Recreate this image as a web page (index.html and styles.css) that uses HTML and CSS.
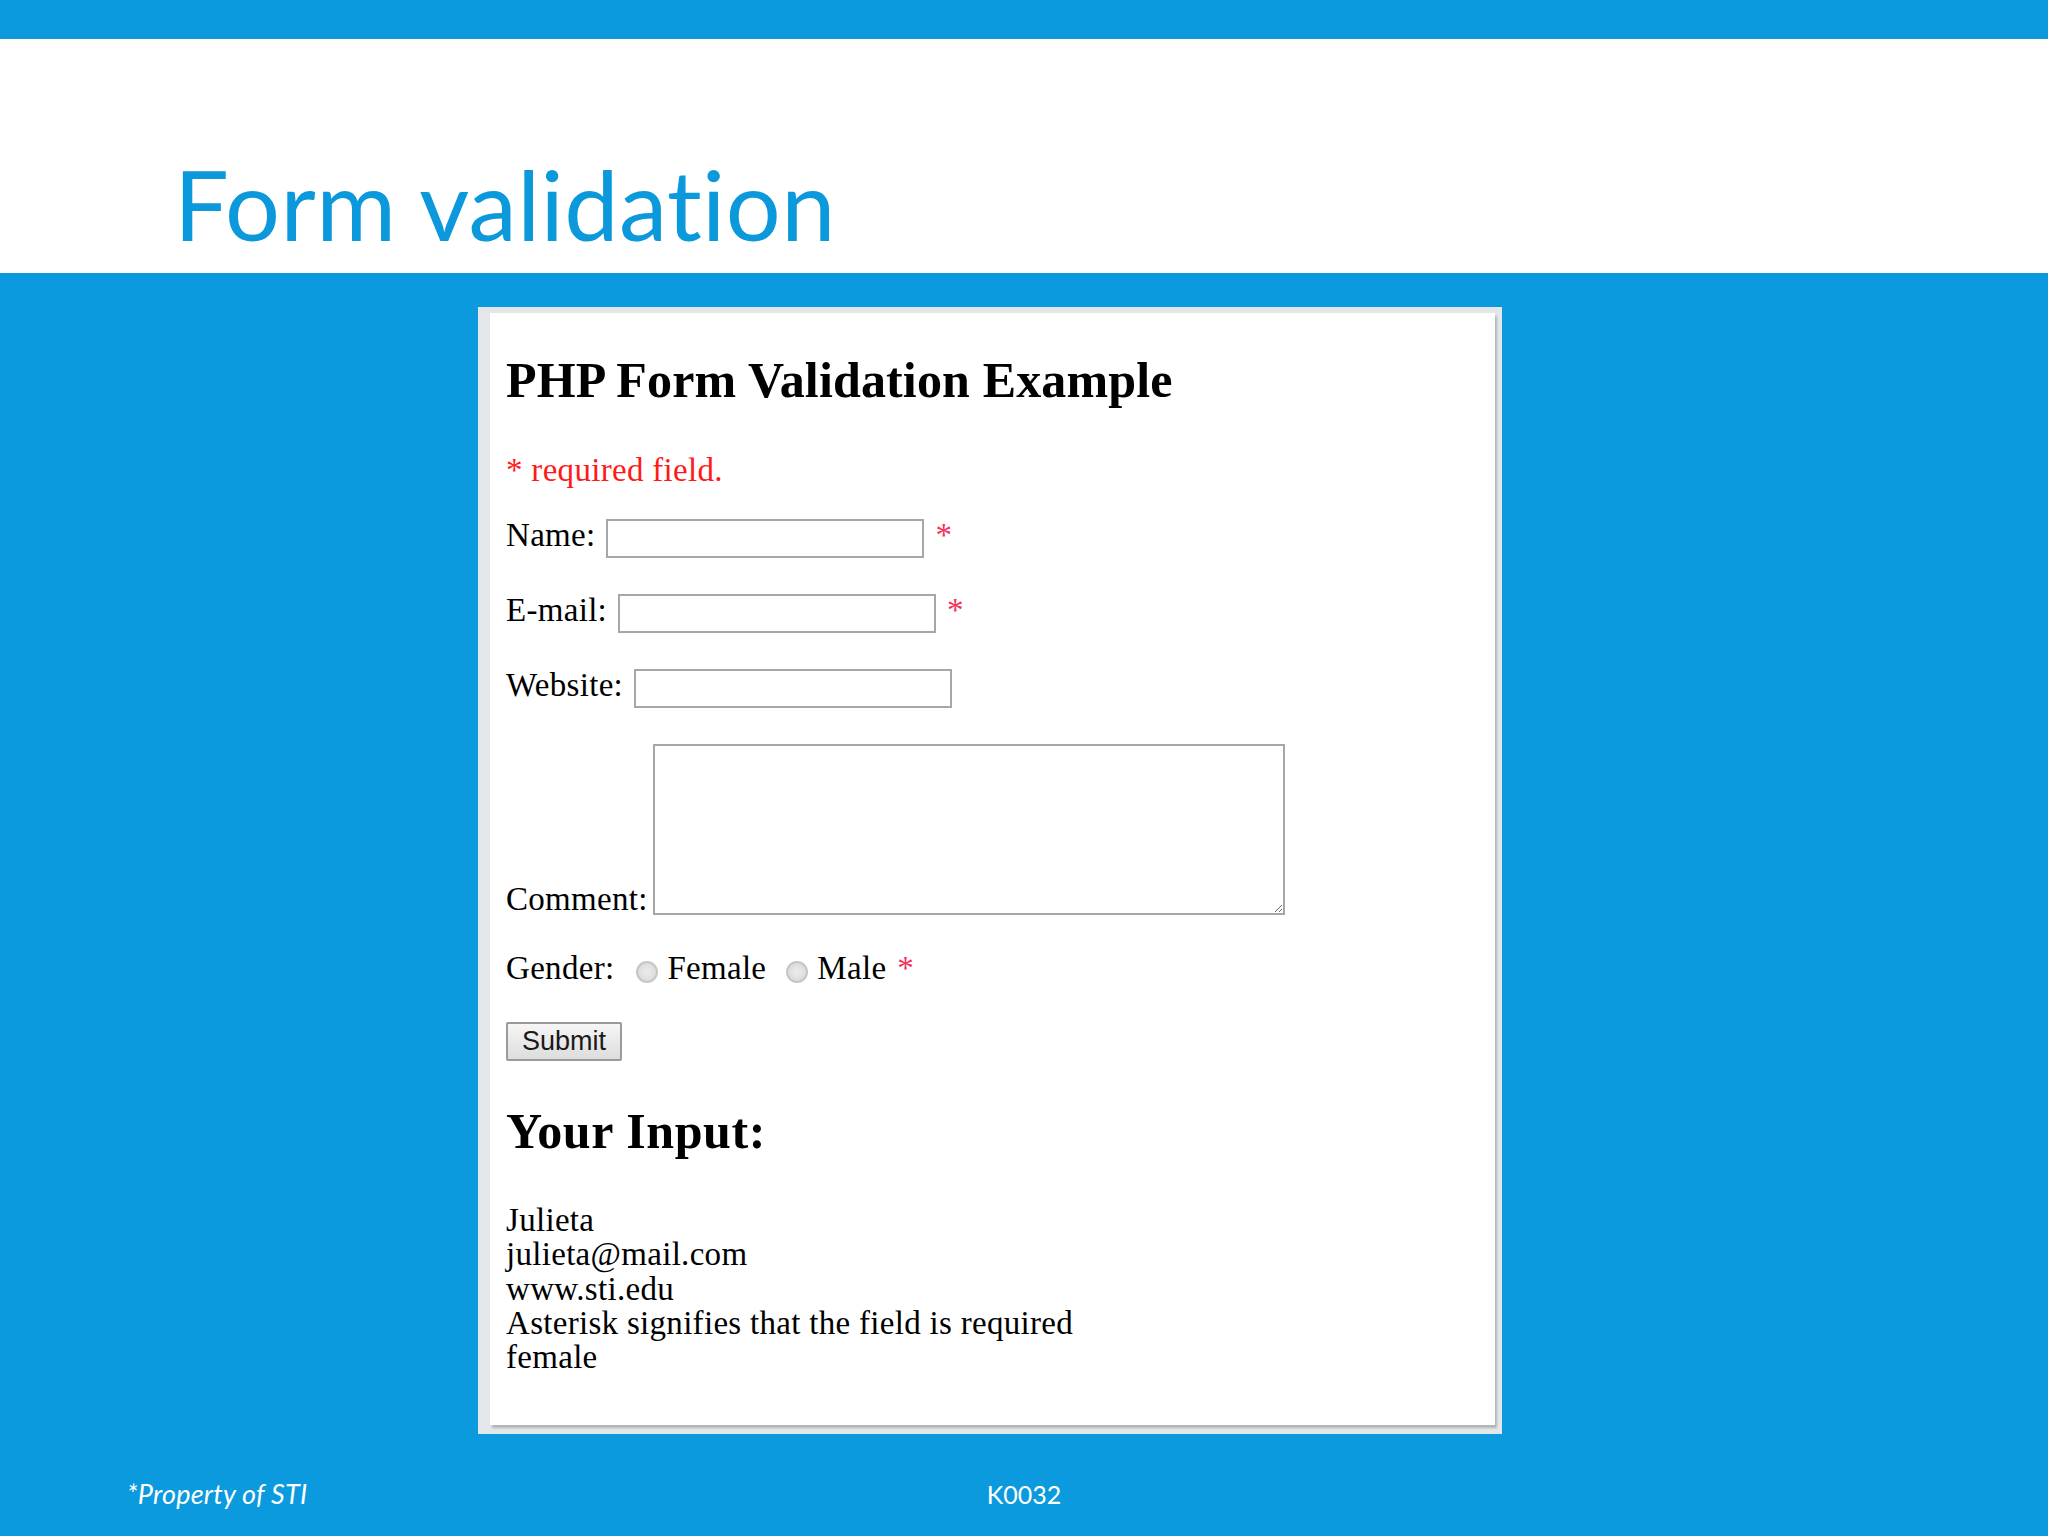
FILE: index.html
```html
<!DOCTYPE html>
<html lang="en">
<head>
<meta charset="utf-8">
<title>Form validation</title>
<link rel="stylesheet" href="styles.css">
</head>
<body>
<div class="topbar"></div>
<header class="header">
  <h1 class="title">Form validation</h1>
</header>
<main class="stage">
  <div class="shot">
    <div class="page">
      <h2 class="ph2">PHP Form Validation Example</h2>
      <p class="req">* required field.</p>
      <div class="row r-name"><span class="lbl">Name:</span><input class="txt" type="text"><span class="ast">*</span></div>
      <div class="row r-email"><span class="lbl">E-mail:</span><input class="txt" type="text"><span class="ast">*</span></div>
      <div class="row r-web"><span class="lbl">Website:</span><input class="txt" type="text"></div>
      <div class="row r-comment"><span class="lbl">Comment:</span><textarea class="ta"></textarea></div>
      <div class="row r-gender"><span class="lbl glbl">Gender:</span><input class="rad" type="radio" name="g"><span class="opt">Female</span><input class="rad" type="radio" name="g"><span class="opt">Male</span><span class="ast gast">*</span></div>
      <button class="btn" type="button">Submit</button>
      <h2 class="ph2 inh">Your Input:</h2>
      <div class="out">Julieta<br>julieta@mail.com<br>www.sti.edu<br>Asterisk signifies that the field is required<br>female</div>
    </div>
  </div>
  <footer class="foot">
    <div class="fl">*Property of STI</div>
    <div class="fc">K0032</div>
    <div class="fr"></div>
  </footer>
</main>
</body>
</html>
```
FILE: styles.css
```css
html, body {
  margin: 0;
  padding: 0;
}
body {
  width: 2048px;
  height: 1536px;
  overflow: hidden;
  background: #0a9add;
  font-family: Lato, "Open Sans", sans-serif;
}
.topbar {
  height: 39px;
  background: #0a9add;
}
.header {
  height: 234px;
  box-sizing: border-box;
  background: #ffffff;
  padding: 107px 0 0 174px;
}
.title {
  margin: 0;
  font-family: Lato, "Open Sans", sans-serif;
  font-weight: 400;
  font-size: 97px;
  line-height: 1.2;
  letter-spacing: 0.4px;
  font-variant-ligatures: none;
  color: #0b99db;
}
.stage {
  height: 1263px;
  box-sizing: border-box;
  padding-top: 34px;
  background: #0a9add;
}
.shot {
  margin-left: 478px;
  width: 1024px;
  height: 1127px;
  box-sizing: border-box;
  padding: 6px 7px 9px 12px;
  background: #e4e7e9;
}
.page {
  height: 100%;
  box-sizing: border-box;
  padding: 38px 16px 0 16px;
  background: #ffffff;
  box-shadow: 2px 3px 2px rgba(0, 0, 0, 0.22);
  font-family: "Liberation Serif", "Times New Roman", serif;
  font-size: 33px;
  letter-spacing: 0.3px;
  color: #000;
}
.ph2 {
  margin: 0;
  font-size: 50px;
  line-height: 58px;
  font-weight: 700;
  letter-spacing: 0.15px;
  color: #000;
}
.inh {
  margin-top: 41px;
  letter-spacing: 0.6px;
}
.req {
  margin: 43px 0 0 0;
  line-height: 37px;
  color: #ff1a1a;
}
.row {
  display: flex;
  align-items: flex-start;
  line-height: 37px;
}
.r-name { margin-top: 28px; }
.r-email { margin-top: 34px; }
.r-web { margin-top: 34px; }
.txt {
  margin: 2px 0 0 11px;
  width: 318px;
  height: 39px;
  box-sizing: border-box;
  border: 2px solid #a7a7a7;
  padding: 0 4px;
  background: #fff;
  outline: none;
}
.ast {
  margin-left: 11px;
  color: #f2305a;
}
.r-comment {
  margin-top: 36px;
  align-items: flex-end;
}
.ta {
  margin: 0 0 3px 5px;
  width: 632px;
  height: 171px;
  box-sizing: border-box;
  border: 2px solid #a7a7a7;
  background: #fff;
  outline: none;
}
.r-gender { margin-top: 32px; }
.glbl { margin-right: 22px; }
.rad {
  appearance: none;
  -webkit-appearance: none;
  margin: 11px 9px 0 0;
  width: 22px;
  height: 22px;
  box-sizing: border-box;
  border-radius: 50%;
  border: 2px solid #c6c6c6;
  background: radial-gradient(circle, #ececec 0%, #dcdcdc 70%);
}
.opt { margin-right: 20px; }
.opt + .ast { margin-left: -9px; }
.btn {
  display: block;
  margin-top: 35px;
  height: 39px;
  padding: 0 14px;
  box-sizing: border-box;
  border: 2px solid #9a9a9a;
  border-radius: 2px;
  background: linear-gradient(#f6f6f6, #dddddd);
  font-family: "Liberation Sans", Arial, sans-serif;
  font-size: 27px;
  line-height: 33px;
  color: #1a1a1a;
}
.out {
  margin-top: 43px;
  line-height: 34.3px;
}
.foot {
  display: grid;
  grid-template-columns: 1fr auto 1fr;
  margin-top: 45px;
  font-family: Lato, "Open Sans", sans-serif;
  font-size: 27px;
  line-height: 30px;
  color: #ffffff;
}
.fl {
  padding-left: 127px;
  font-style: italic;
  letter-spacing: 0.2px;
}
.fc {
  font-size: 25px;
}
```
